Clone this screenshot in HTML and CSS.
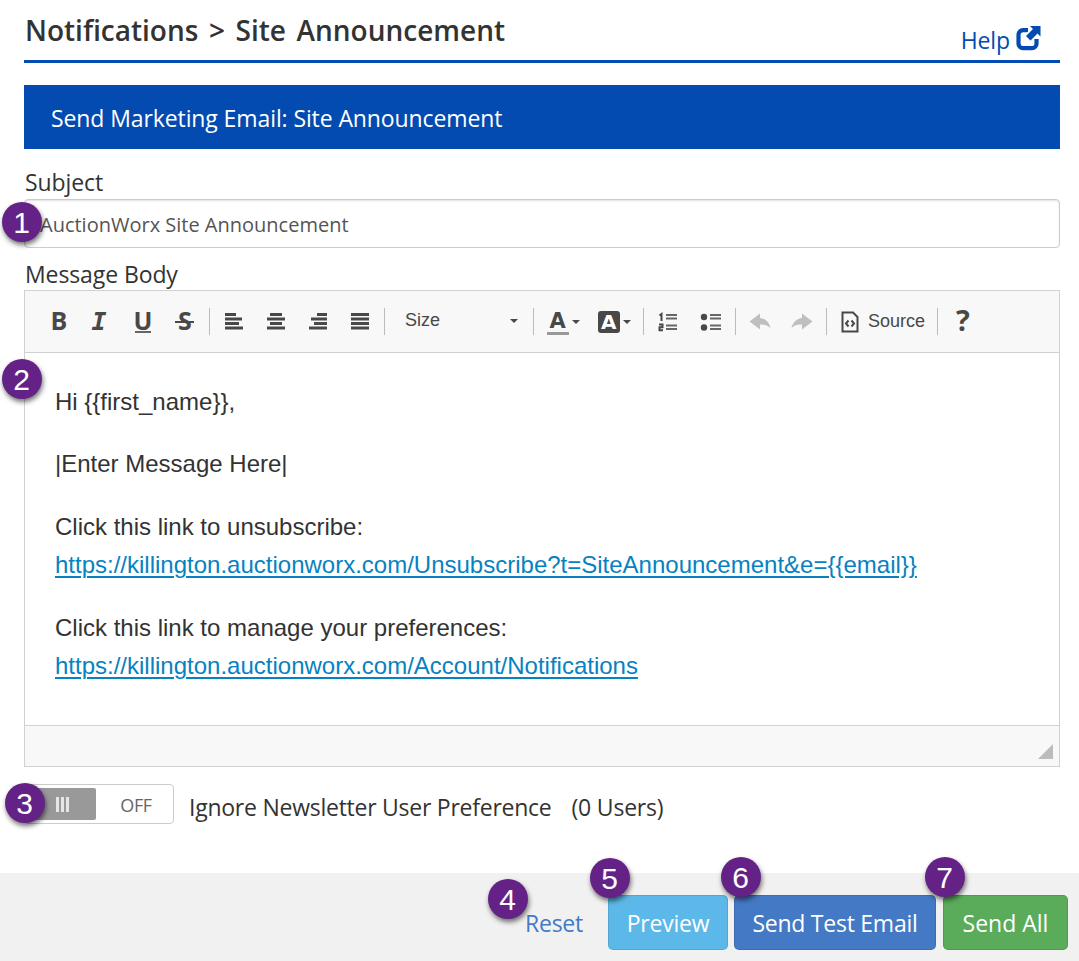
FILE: index.html
```html
<!DOCTYPE html>
<html lang="en">
<head>
<meta charset="UTF-8">
<meta name="viewport" content="width=device-width, initial-scale=1">
<title>Notifications - Site Announcement</title>
<link rel="stylesheet" href="styles.css">
</head>
<body>

<div class="container">
  <div class="page-header">
    <h1>Notifications &gt; Site Announcement</h1>
    <a href="#" class="help-link"><span>Help</span>
      <svg width="26" height="26" viewBox="0 0 26 26">
        <path d="M12 4.200H7a4.500 4.500 0 0 0-4.500 4.500v9A4.500 4.500 0 0 0 7 22.200h9a4.500 4.500 0 0 0 4.500-4.500V13" fill="none" stroke="#034bb0" stroke-width="4.200"/>
        <path class="help-arrow" d="M14 0H24.500v10.500l-3-3-7 7-4.500-4.500 7-7z"/>
      </svg>
    </a>
  </div>

  <div class="panel-heading">Send Marketing Email: Site Announcement</div>

  <div class="field">
    <label class="subject-label" for="subject">Subject</label>
    <input type="text" id="subject" value="AuctionWorx Site Announcement">
    <span class="badge badge-1">1</span>
  </div>

  <div class="field">
    <label class="body-label">Message Body</label>
    <div class="editor">
      <div class="toolbar">
        <span class="btn bold">B</span>
        <span class="btn italic">I</span>
        <span class="btn underline">U</span>
        <span class="btn strike">S</span>
        <span class="sep"></span>
        <span class="btn"><svg width="20" height="20"><path d="M1 2.500h11M1 7h17M1 11.500h14M1 16h18"/></svg></span>
        <span class="btn"><svg width="20" height="20"><path d="M4 2.500h12M1 7h18M4 11.500h12M1 16h18"/></svg></span>
        <span class="btn"><svg width="20" height="20"><path d="M9 2.500h10M3 7h16M6 11.500h13M1 16h18"/></svg></span>
        <span class="btn"><svg width="20" height="20"><path d="M1 2.500h18M1 7h18M1 11.500h18M1 16h18"/></svg></span>
        <span class="sep"></span>
        <span class="combo">Size<i class="arrow"></i></span>
        <span class="sep"></span>
        <span class="btn color"><b class="text-color">A</b><i class="arrow"></i></span>
        <span class="btn color"><b class="bg-color">A</b><i class="arrow"></i></span>
        <span class="sep"></span>
        <span class="btn list"><svg width="20" height="20">
          <path class="thin" d="M8 3h11M8 6.500h11M8 13.500h11M8 17h11"/>
          <path class="num" d="M1.500 3.500L3.500 2v7M1 12.500h3.500v2.700H1.500v3H5"/>
        </svg></span>
        <span class="btn list"><svg width="22" height="20">
          <path class="thin" d="M10 3h11M10 6.500h11M10 13.500h11M10 17h11"/>
          <circle cx="4" cy="5" r="3.200"/><circle cx="4" cy="15.500" r="3.200"/>
        </svg></span>
        <span class="sep"></span>
        <span class="btn"><svg class="muted" width="22" height="20"><path d="M.5 9.500L11 1.500v4.500c5 .5 9 4 10.500 10C18.500 13 15 12 11 12.500v5z"/></svg></span>
        <span class="btn"><svg class="muted" width="22" height="20"><path d="M21.500 9.500L11 1.500v4.500C6 6.500 2 10 .5 16 3.500 13 7 12 11 12.500v5z"/></svg></span>
        <span class="sep"></span>
        <span class="btn source"><svg width="18" height="22">
          <path class="file" d="M1.500 1.500h10.500l4.500 4.500v14.500h-15zM7.500 9.500L5 12.500l2.500 3M10.500 9.500l2.500 3-2.500 3"/>
        </svg>Source</span>
        <span class="sep"></span>
        <span class="btn about">?</span>
      </div>
      <div class="message">
        <p>Hi {{first_name}},</p>
        <p>|Enter Message Here|</p>
        <p>Click this link to unsubscribe:<br>
          <a href="#">https://killington.auctionworx.com/Unsubscribe?t=SiteAnnouncement&amp;e={{email}}</a></p>
        <p>Click this link to manage your preferences:<br>
          <a href="#">https://killington.auctionworx.com/Account/Notifications</a></p>
      </div>
      <div class="editor-bottom"><span class="resizer"></span></div>
    </div>
    <span class="badge badge-2">2</span>
  </div>

  <div class="preference">
    <div class="switch"><span class="handle"><i></i><i></i><i></i></span><span class="off">OFF</span></div>
    <span class="pref-label">Ignore Newsletter User Preference</span>
    <span class="pref-count">(0 Users)</span>
    <span class="badge badge-3">3</span>
  </div>
</div>

<div class="footer">
  <a href="#" class="action reset"><span>Reset</span><span class="badge badge-4">4</span></a>
  <a href="#" class="action preview"><span>Preview</span><span class="badge badge-5">5</span></a>
  <a href="#" class="action test"><span>Send Test Email</span><span class="badge badge-6">6</span></a>
  <a href="#" class="action send"><span>Send All</span><span class="badge badge-7">7</span></a>
</div>

</body>
</html>
```
FILE: styles.css
```css
* {
  box-sizing: border-box;
}
body {
  margin: 0;
  height: 961px;
  display: flex;
  flex-direction: column;
  overflow: hidden;
  background: #fff;
  color: #333;
  font-family: 'Open Sans', sans-serif;
  font-size: 23px;
  letter-spacing: -0.1px;
}
.container {
  flex: 1;
  padding: 0 19px 0 24px;
}
.page-header {
  display: flex;
  justify-content: space-between;
  height: 63px;
  border-bottom: 3px solid #034bb0;
}
h1 {
  margin: 10px 0 0 1px;
  font-size: 28px;
  line-height: 40px;
  font-weight: 600;
  letter-spacing: 0;
  word-spacing: 3.3px;
  white-space: nowrap;
}
.help-link {
  display: flex;
  gap: 6px;
  margin: 26px 18px 0 0;
  line-height: 28px;
  color: #034bb0;
  text-decoration: none;
}
.help-arrow {
  fill: #034bb0;
  stroke: #fff;
  stroke-width: 3;
  paint-order: stroke;
}
.panel-heading {
  height: 64px;
  margin-top: 22px;
  padding: 1px 27px 0;
  line-height: 64px;
  background: #034bb0;
  color: #fff;
}
.field {
  position: relative;
}
label {
  display: block;
  padding-left: 1px;
}
.subject-label {
  height: 50px;
  padding-top: 17px;
  line-height: 32px;
}
.body-label {
  height: 42px;
  padding-top: 10px;
  line-height: 32px;
}
input {
  display: block;
  width: 100%;
  height: 49px;
  padding: 2px 16px 0 15px;
  border: 1px solid #ccc;
  border-radius: 4px;
  box-shadow: inset 0 1px 2px rgba(0,0,0,0.12);
  color: #555;
  font-family: 'Open Sans', sans-serif;
  font-size: 20px;
}
.editor {
  height: 477px;
  display: flex;
  flex-direction: column;
  border: 1px solid #d1d1d1;
}
.toolbar {
  flex: none;
  display: flex;
  align-items: center;
  height: 62px;
  padding-left: 13px;
  border-bottom: 1px solid #d1d1d1;
  background: #f8f8f8;
  color: #484848;
  font-family: 'Liberation Sans', sans-serif;
  font-size: 18px;
  letter-spacing: 0;
}
.btn {
  width: 42px;
  height: 40px;
  display: flex;
  align-items: center;
  justify-content: center;
}
.btn svg {
  fill: #484848;
}
.btn path {
  stroke: #484848;
  stroke-width: 3;
}
.btn .thin {
  stroke: #666;
  stroke-width: 2;
}
.btn .num, .btn .file {
  fill: none;
  stroke-width: 2;
}
.btn .muted path {
  fill: #bfbfbf;
  stroke: none;
}
.bold, .italic, .underline, .strike, .about {
  padding-bottom: 4px;
  font-family: 'Open Sans', sans-serif;
  font-size: 25px;
  font-weight: 700;
  line-height: 36px;
}
.italic {
  padding: 0 4px 0 0;
  font-family: 'DejaVu Sans Mono', monospace;
  font-style: italic;
}
.underline {
  position: relative;
}
.underline::after {
  content: '';
  position: absolute;
  left: 13px;
  top: 29px;
  width: 16px;
  height: 2px;
  background: #666;
}
.strike {
  position: relative;
}
.strike::after {
  content: '';
  position: absolute;
  left: 11px;
  top: 19px;
  width: 19px;
  height: 2px;
  background: #484848;
}
.about {
  width: 43px;
  padding-left: 1px;
  font-size: 29px;
}
.sep {
  width: 1px;
  height: 27px;
  margin: 0 3px;
  background: #bcbcbc;
}
.arrow {
  border: 4px solid transparent;
  border-top-color: #484848;
  border-bottom: 0;
}
.combo {
  width: 142px;
  display: flex;
  align-items: center;
  justify-content: space-between;
  padding: 0 12px 2px 17px;
}
.color {
  width: 51.5px;
  gap: 3px;
}
.text-color {
  width: 22px;
  height: 23px;
  margin: 3px 0 0 1px;
  border-bottom: 3px solid #999;
  font-family: 'DejaVu Sans', sans-serif;
  font-size: 21px;
  line-height: 18px;
  text-align: center;
}
.bg-color {
  width: 22px;
  height: 22px;
  border-radius: 3px;
  background: #484848;
  color: #fff;
  font-family: 'DejaVu Sans', sans-serif;
  font-size: 20px;
  line-height: 22px;
  text-align: center;
}
.list {
  width: 42.5px;
}
.source {
  width: 104px;
  gap: 9px;
  padding-left: 2px;
}
.message {
  flex: 1;
  min-height: 0;
  padding: 30px 30px 0;
  font-family: 'Liberation Sans', sans-serif;
  font-size: 24px;
  line-height: 38.4px;
  letter-spacing: 0;
}
.message p {
  margin: 0 0 24px;
}
.message a {
  color: #0782c1;
  text-underline-offset: 3px;
  text-decoration-thickness: 2px;
}
.editor-bottom {
  flex: none;
  display: flex;
  align-items: flex-end;
  justify-content: flex-end;
  height: 41px;
  padding: 0 6px 7px 0;
  border-top: 1px solid #d1d1d1;
  background: #f8f8f8;
}
.resizer {
  width: 15px;
  height: 15px;
  background: #bcbcbc;
  clip-path: polygon(100% 0, 100% 100%, 0 100%);
}
.preference {
  position: relative;
  display: flex;
  align-items: center;
  height: 40px;
  margin-top: 17px;
  white-space: nowrap;
}
.switch {
  display: flex;
  width: 150px;
  height: 40px;
  padding: 3px;
  border: 1px solid #ccc;
  border-radius: 4px;
}
.handle {
  display: flex;
  justify-content: center;
  align-items: center;
  gap: 2px;
  width: 68px;
  border-radius: 2px;
  background: #999;
}
.handle i {
  width: 3px;
  height: 15px;
  background: #e6e6e6;
}
.off {
  flex: 1;
  padding: 1px 0 0 6px;
  font-size: 18px;
  line-height: 32px;
  letter-spacing: -0.4px;
  color: #666;
  text-align: center;
}
.pref-label {
  margin: 6px 0 0 15px;
  letter-spacing: -0.25px;
}
.pref-count {
  margin: 6px 0 0 20px;
  letter-spacing: -0.2px;
}
.footer {
  display: flex;
  justify-content: flex-end;
  height: 88px;
  padding: 22px 11px 0 0;
  background: #f1f1f1;
  letter-spacing: -0.25px;
}
.action {
  position: relative;
  height: 55px;
  display: flex;
  align-items: center;
  justify-content: center;
  border: 1px solid rgba(0,0,0,0.1);
  border-radius: 5px;
  color: #fff;
  text-decoration: none;
  white-space: nowrap;
}
.reset {
  width: 96px;
  margin-right: 6px;
  border-color: transparent;
  color: #4479c6;
}
.preview {
  width: 120px;
  margin-right: 6px;
  background: #5cb8e8;
}
.test {
  width: 202px;
  margin-right: 7px;
  background: #4479c6;
}
.send {
  width: 125px;
  background: #5aab5a;
  letter-spacing: 0;
}
.badge {
  position: absolute;
  width: 40px;
  height: 40px;
  padding-right: 1px;
  border-radius: 50%;
  background: #642287;
  box-shadow: 1px 3px 5px rgba(0,0,0,0.55);
  color: #fff;
  font-family: 'Liberation Sans', sans-serif;
  font-size: 30px;
  line-height: 41px;
  letter-spacing: 0;
  text-align: center;
}
.badge-1 {
  left: -22px;
  top: 53px;
}
.badge-2 {
  left: -22px;
  top: 111px;
}
.badge-3 {
  left: -19px;
  top: -1px;
}
.badge-4 {
  left: -19px;
  top: -17px;
}
.badge-5 {
  left: -19px;
  top: -38px;
}
.badge-6 {
  left: -14px;
  top: -39px;
}
.badge-7 {
  left: -19px;
  top: -39px;
}
```
